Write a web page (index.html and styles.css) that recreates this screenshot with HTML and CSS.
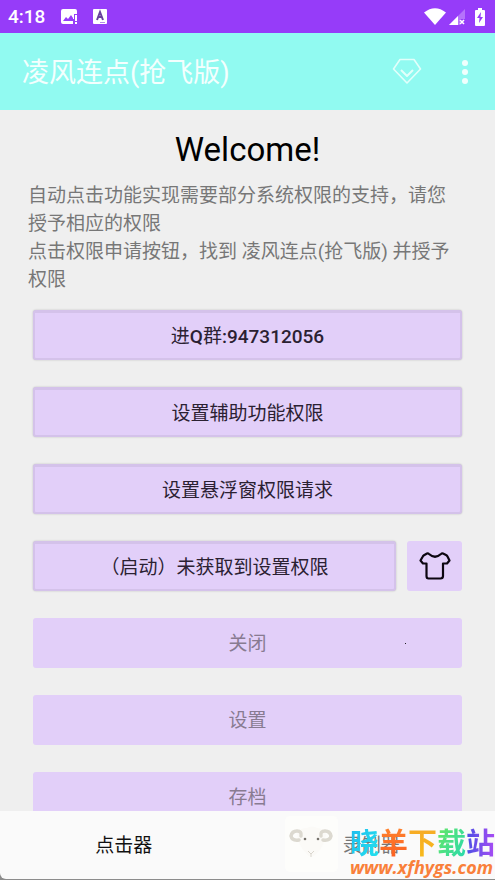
FILE: index.html
```html
<!DOCTYPE html>
<html lang="zh-CN">
<head>
<meta charset="utf-8">
<meta name="viewport" content="width=device-width, initial-scale=1">
<title>凌风连点(抢飞版)</title>
<link rel="stylesheet" href="styles.css">
</head>
<body>
<div class="status">
  <span class="clock">4:18</span>
  <svg class="note" width="16" height="16" viewBox="0 0 16 16"><path fill="#fff" d="M2 0h12q2 0 2 2v3h-3v5h-1v5H2q-2 0-2-2V2q0-2 2-2z"/><path fill="#963cf9" d="M2 12l3-4 2 2 3-4 2 3v3z"/><path fill="#fff" d="M14 6h2v6h-2zM14 13h2v2h-2z"/></svg>
  <svg class="note" width="14" height="15" viewBox="0 0 14 15"><rect width="14" height="15" rx="1" fill="#fff"/><path fill="none" stroke="#66409c" stroke-width="2" d="M4 11l3-8 3 8M5 8h4"/><path stroke="#b48ae8" d="M7 13.500h5"/></svg>
  <span class="grow"></span>
  <svg class="wifi" width="22" height="17" viewBox="0 0 22 17"><path fill="#fff" d="M0 4.500Q11-4 22 4.500L11 17z"/></svg>
  <svg class="signal" width="16" height="16" viewBox="0 0 16 16"><path fill="#b573fb" d="M16 0v10h-5v6H0z"/><path fill="#fff" d="M9 7v9H0z"/><path stroke="#fff" stroke-width="1.600" d="M11 11l4 4M15 11l-4 4"/></svg>
  <svg width="10" height="18" viewBox="0 0 10 18"><path fill="#fff" d="M3 0h4v2h2q1 0 1 1v14q0 1-1 1H1q-1 0-1-1V3q0-1 1-1h2z"/><path fill="#963cf9" d="M6 4L2 10h2.500L4 15l4-6H5.500z"/></svg>
</div>
<header class="appbar">
  <h1>凌风连点(抢飞版)</h1>
  <button class="icon" aria-label="会员"><svg width="30" height="27" viewBox="0 0 30 27" fill="none" stroke="#e2fffb" stroke-width="1.600" stroke-linejoin="round"><path d="M8 1.500h14l6.500 9.500L15 25 1.500 11z"/><path d="M9 12l6 6 6-6" stroke-width="2"/></svg></button>
  <button class="icon more" aria-label="更多"><svg width="6" height="24" viewBox="0 0 6 24" fill="#f0fffd"><circle cx="3" cy="3" r="3"/><circle cx="3" cy="12" r="3"/><circle cx="3" cy="21" r="3"/></svg></button>
</header>
<main>
  <h2>Welcome!</h2>
  <div class="intro">
    <p>自动点击功能实现需要部分系统权限的支持，请您授予相应的权限</p>
    <p>点击权限申请按钮，找到 凌风连点(抢飞版) 并授予权限</p>
  </div>
  <div class="actions">
    <button class="btn raised">进<b>Q</b>群<b>:947312056</b></button>
    <button class="btn raised">设置辅助功能权限</button>
    <button class="btn raised">设置悬浮窗权限请求</button>
    <div class="row">
      <button class="btn raised">（启动）未获取到设置权限</button>
      <button class="btn skin" aria-label="皮肤"><svg width="32" height="28" viewBox="0 0 32 28" fill="none" stroke="#0c0610" stroke-width="2.200" stroke-linejoin="round"><path d="M8 1.500Q9 1 10 2q6 5.500 12 0 1-1 2-.5l3 1.500q1 .5 1.500 1.500l2 4-2.500 3H24V24q0 2.500-2.500 2.500h-12Q7.500 26.500 7.500 24V11.500H4l-2.500-3 2-3.500Q4 4 5 3.200z"/></svg></button>
    </div>
    <button class="btn speck" disabled>关闭</button>
    <button class="btn" disabled>设置</button>
    <button class="btn" disabled>存档</button>
  </div>
</main>
<footer>
  <nav>
    <a href="#click">点击器</a>
    <a href="#record" class="idle">录制器</a>
  </nav>
  <div class="mark">
    <svg width="53" height="56" viewBox="0 0 53 56"><rect width="53" height="56" rx="5" fill="#fdfdfb"/><path fill="#fbfaf7" d="M12 18q3-7 10-6 5-3 10 0 8 0 9 7-3 13-9 18-6 7-11 0-8-8-9-19z"/><g fill="none" stroke="#dcd9d0" stroke-width="3.500" stroke-linecap="round"><path d="M14 24q-7 1-8-4 1-5 6-5 5 0 4 5"/><path d="M38 24q7 1 8-4-1-5-6-5-5 0-4 5"/></g><g fill="#77736c"><circle cx="20" cy="23" r="1.300"/><circle cx="33" cy="23" r="1.300"/></g><path fill="none" stroke="#dad6ce" d="M23 35l3 3 3-3M26 38v3"/></svg>
    <div class="site">
      <strong><span class="c1">晓</span><span class="c2">羊</span><span class="c3">下</span><span class="c4">载</span><span class="c5">站</span></strong>
      <em>www.xfhygs.com</em>
    </div>
  </div>
</footer>
</body>
</html>
```
FILE: styles.css
```css
* { box-sizing: border-box; }
body {
  margin: 0;
  height: 100vh;
  display: flex;
  flex-direction: column;
  background: #efefef;
  font-family: Roboto, "Noto Sans CJK SC", sans-serif;
  font-size: 19px;
}
button { border: 0; padding: 0; font: inherit; }
svg { display: block; }
h1, h2, p { margin: 0; font-weight: 400; }
b { font-weight: 500; }

.status {
  flex: none;
  height: 33px;
  display: flex;
  align-items: center;
  padding: 0 10px 0 8px;
  background: #963cf9;
  color: #fff;
}
.clock { font-weight: 500; line-height: 34px; }
.note { margin-left: 16px; }
.grow { flex: 1; }
.wifi { margin-right: 3px; }
.signal { margin-right: 10px; }

.appbar {
  flex: none;
  height: 77px;
  display: flex;
  align-items: center;
  padding: 0 27px 0 22px;
  background: #91faf1;
  color: #f4fffe;
}
.appbar h1 { flex: 1; padding-top: 3px; font-size: 27px; line-height: 40px; }
.icon { background: none; }
.more { margin-left: 40px; }

main { flex: 1; min-height: 0; overflow: hidden; }
h2 {
  padding-top: 20px;
  text-align: center;
  font-size: 33px;
  line-height: 40px;
  color: #000;
}
.intro {
  padding: 12px 38px 0 28px;
  line-height: 28px;
  color: #777;
}
.actions {
  display: flex;
  flex-direction: column;
  gap: 27px;
  padding: 16px 33px 27px;
}
.btn {
  flex: none;
  height: 50px;
  padding-bottom: 3px;
  border-radius: 3px;
  background: #e2cff9;
  color: #2b2132;
}
.btn:disabled { color: #887b91; }
.raised {
  border: 2px solid #d4c2ea;
  border-top-width: 3px;
  box-shadow: 0 0 2px #00000038;
}
.row { display: flex; gap: 11px; }
.row .raised { flex: 1; }
.skin { width: 55px; display: grid; place-items: center; padding: 0; }
.speck { position: relative; }
.speck::after {
  content: "";
  position: absolute;
  right: 56px;
  top: 25px;
  width: 1px;
  height: 1px;
  background: #222;
}

footer {
  flex: none;
  position: relative;
  background: #8c8c8c;
  padding-bottom: 1px;
}
nav {
  display: flex;
  height: 68px;
  background: #fafafa;
  border-radius: 0 0 0 6px;
}
nav a {
  flex: 1;
  text-align: center;
  line-height: 70px;
  color: #111;
  text-decoration: none;
}
nav .idle { color: #777; }

.mark {
  position: absolute;
  right: 0;
  top: 5px;
  display: flex;
  gap: 12px;
  pointer-events: none;
}
.site { display: flex; flex-direction: column; }
.site strong {
  font: 700 29px/32px "Noto Sans CJK SC", sans-serif;
  margin-top: 9px;
}
.site span {
  color: transparent;
  background-clip: text;
  -webkit-background-clip: text;
}
.c1 { background-image: linear-gradient(120deg, #20b8ee, #22e4ee); }
.c2 { background-image: linear-gradient(#ff8a30, #fb5b20); }
.c3 { background-image: linear-gradient(#f6a62a, #f8bc18); }
.c4 { background-image: linear-gradient(120deg, #6ee85c, #24d8b4); }
.c5 { background-image: linear-gradient(90deg, #4a50e4, #a94cf4); }
.site em {
  font: italic 700 18px/20px "Open Sans", sans-serif;
  color: #f9803a;
}
```
